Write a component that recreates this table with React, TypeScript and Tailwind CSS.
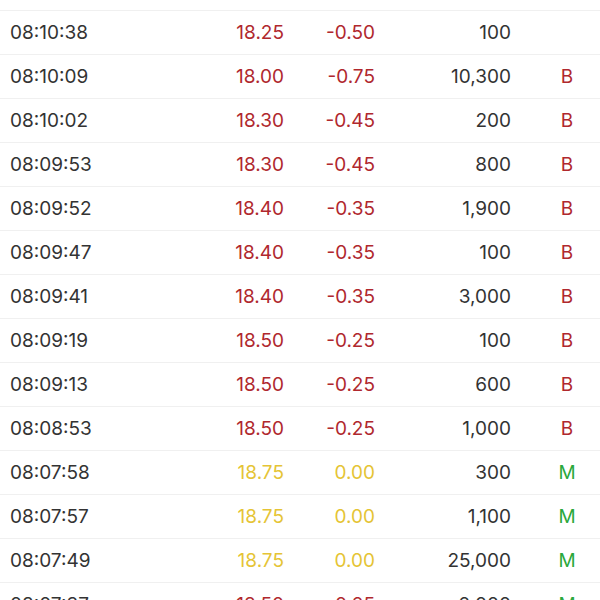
import React from 'react';

type Trade = {
  time: string;
  price: string;
  change: string;
  volume: string;
  flag: string;
};

const trades: Trade[] = [
  { time: '08:10:38', price: '18.25', change: '-0.50', volume: '100', flag: '' },
  { time: '08:10:09', price: '18.00', change: '-0.75', volume: '10,300', flag: 'B' },
  { time: '08:10:02', price: '18.30', change: '-0.45', volume: '200', flag: 'B' },
  { time: '08:09:53', price: '18.30', change: '-0.45', volume: '800', flag: 'B' },
  { time: '08:09:52', price: '18.40', change: '-0.35', volume: '1,900', flag: 'B' },
  { time: '08:09:47', price: '18.40', change: '-0.35', volume: '100', flag: 'B' },
  { time: '08:09:41', price: '18.40', change: '-0.35', volume: '3,000', flag: 'B' },
  { time: '08:09:19', price: '18.50', change: '-0.25', volume: '100', flag: 'B' },
  { time: '08:09:13', price: '18.50', change: '-0.25', volume: '600', flag: 'B' },
  { time: '08:08:53', price: '18.50', change: '-0.25', volume: '1,000', flag: 'B' },
  { time: '08:07:58', price: '18.75', change: '0.00', volume: '300', flag: 'M' },
  { time: '08:07:57', price: '18.75', change: '0.00', volume: '1,100', flag: 'M' },
  { time: '08:07:49', price: '18.75', change: '0.00', volume: '25,000', flag: 'M' },
  { time: '08:07:37', price: '18.50', change: '-0.25', volume: '2,000', flag: 'M' },
];

function priceColor(change: string) {
  if (change.startsWith('-')) return 'text-[#b0282e]';
  if (change === '0.00') return 'text-[#e5c435]';
  return 'text-[#2aa83c]';
}

function flagColor(flag: string) {
  return flag === 'M' ? 'text-[#2aa83c]' : 'text-[#b0282e]';
}

function TradeRow({ trade }: { trade: Trade }) {
  const color = priceColor(trade.change);
  return (
    <div className="flex items-center h-[44px] border-b border-[#f0f0f0] shrink-0 text-[19px] leading-none">
      <div className="w-[200px] pl-[10px] text-[#333333]">{trade.time}</div>
      <div className={`w-[84px] text-right ${color}`}>{trade.price}</div>
      <div className={`w-[91px] text-right ${color}`}>{trade.change}</div>
      <div className="w-[136px] text-right text-[#333333]">{trade.volume}</div>
      <div className={`w-[56px] ml-[28px] text-center ${flagColor(trade.flag)}`}>{trade.flag}</div>
    </div>
  );
}

export default function App() {
  return (
    <div className="w-[600px] h-[600px] overflow-hidden bg-white flex flex-col font-['Inter',sans-serif]">
      {/* tail of the row scrolled above */}
      <div className="h-[11px] border-b border-[#f0f0f0] shrink-0" />
      {trades.map((t) => (
        <TradeRow key={t.time} trade={t} />
      ))}
    </div>
  );
}
